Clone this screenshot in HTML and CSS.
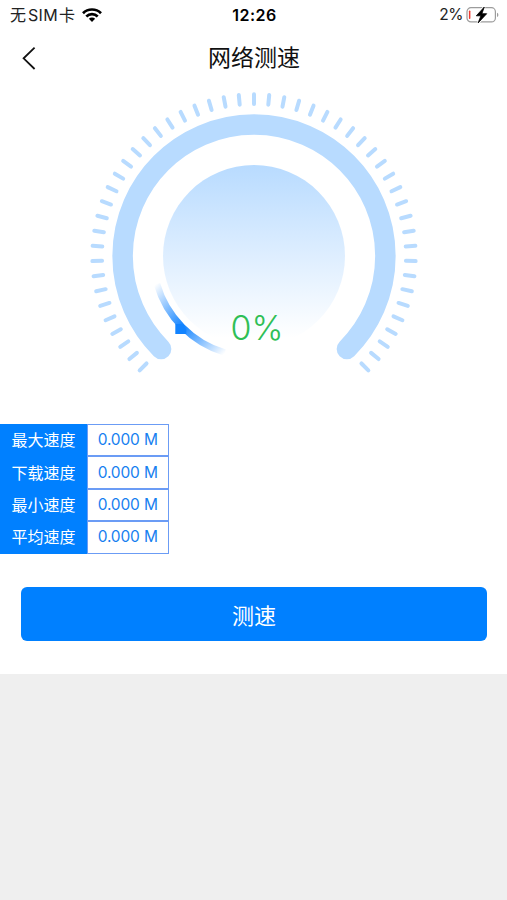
FILE: index.html
```
<!DOCTYPE html>
<html lang="zh-CN">
<head>
    <meta charset="UTF-8">
    <title>网络测速</title>
    <meta name="viewport" content="width=device-width, initial-scale=1">
    <link rel="stylesheet" href="styles.css">
</head>
<body>
<div class="page">
    <div class="status-bar">
        <div class="carrier">
            <span>无</span><span class="sim">SIM</span><span>卡</span>
            <svg class="wifi" width="20" height="14" viewBox="0 0 20 14">
                <g fill="none" stroke="#000" stroke-width="2.7">
                    <path d="M1 5.2A12.8 12.8 0 0 1 19 5.2"/>
                    <path d="M4.3 8.5A8.1 8.1 0 0 1 15.7 8.5"/>
                </g>
                <path d="M10 14 6.9 10.8A4.4 4.4 0 0 1 13.1 10.8Z"/>
            </svg>
        </div>
        <div class="time">12:26</div>
        <div class="battery">
            <span>2%</span>
            <svg width="33" height="18" viewBox="0 0 33 18">
                <rect x="1" y="1.7" width="28.4" height="14.2" rx="4" fill="none" stroke="#9c9c9c" stroke-width="1.2"/>
                <path d="M31 6.8v4.2q1.4-.6 1.4-2.1T31 6.8z" fill="#9c9c9c"/>
                <rect x="2.9" y="4.6" width="1.5" height="8.4" rx=".7" fill="#f03a30"/>
                <path d="M18.3 1 10.3 9.8h4.6L12.1 17 20.7 7.7h-4.8z" stroke="#fff" stroke-width="2.4"/>
                <path d="M18.3 1 10.3 9.8h4.6L12.1 17 20.7 7.7h-4.8z" stroke="#000" stroke-width=".8" stroke-linejoin="round"/>
            </svg>
        </div>
    </div>

    <div class="nav">
        <svg class="back" width="16" height="24" viewBox="0 0 16 24">
            <path d="M13.6 1.6 2.6 12.3 13.6 23" fill="none" stroke="#111" stroke-width="1.8"/>
        </svg>
        <h1>网络测速</h1>
    </div>

    <svg class="gauge" width="340" height="300" viewBox="-170 -170 340 300">
        <defs>
            <linearGradient id="disk" x1="0" y1="0" x2="0" y2="1">
                <stop offset="0" stop-color="#b8dbff"/>
                <stop offset=".5" stop-color="#deeeff"/>
                <stop offset=".95" stop-color="#fff"/>
            </linearGradient>
            <linearGradient id="pointer" gradientUnits="userSpaceOnUse" x1="-98" y1="28" x2="-29" y2="97">
                <stop offset="0" stop-color="#1283ff" stop-opacity="0"/>
                <stop offset=".5" stop-color="#1283ff"/>
                <stop offset="1" stop-color="#1283ff" stop-opacity="0"/>
            </linearGradient>
        </defs>
        <g id="ticks" class="ticks"></g>
        <path class="track" d="M-92.9 92.9A131.4 131.4 0 1 1 92.9 92.9"/>
        <circle r="91" fill="url(#disk)"/>
        <path class="arc" d="M-97 28A101 101 0 0 0 -29 96.7"/>
        <path class="knob" d="M-78.7 68h6l5 5v5h-11z"/>
        <text class="percent" y="84"><tspan x="-23.6" textLength="21" lengthAdjust="spacingAndGlyphs">0</tspan><tspan x="-2.6" textLength="32" lengthAdjust="spacingAndGlyphs">%</tspan></text>
    </svg>

    <table class="speeds">
        <tr><th>最大速度</th><td>0.000 M</td></tr>
        <tr><th>下载速度</th><td>0.000 M</td></tr>
        <tr><th>最小速度</th><td>0.000 M</td></tr>
        <tr><th>平均速度</th><td>0.000 M</td></tr>
    </table>

    <button type="button" class="start">测速</button>
</div>
<script>
    // 51 ticks over 270 degrees
    const ticks = document.getElementById('ticks');
    for (let i = -25; i <= 25; i++) {
      const line = document.createElementNS('http://www.w3.org/2000/svg', 'line');
      line.setAttribute('y1', -152);
      line.setAttribute('y2', -161.7);
      line.setAttribute('transform', 'rotate(' + i * 5.4 + ')');
      ticks.appendChild(line);
    }
</script>
</body>
</html>
```
FILE: styles.css
```
* {
  box-sizing: border-box;
}
body {
  margin: 0;
  background: #efefef;
  font-family: Inter, 'Noto Sans CJK SC', sans-serif;
  color: #111;
}
.page {
  height: 674px;
  background: #fff;
  display: flex;
  flex-direction: column;
}
.status-bar {
  display: grid;
  grid-template-columns: 1fr auto 1fr;
  align-items: center;
  height: 30px;
  padding: 0 8px 0 10px;
  font-size: 16px;
  line-height: 30px;
  color: #222;
}
.carrier {
  display: flex;
  align-items: center;
}
.sim {
  margin: 0 1px 0 2px;
  letter-spacing: .3px;
}
.wifi {
  margin-left: 7px;
}
.time {
  font-weight: 600;
  letter-spacing: .5px;
  color: #000;
}
.battery {
  display: flex;
  align-items: center;
  justify-content: flex-end;
  gap: 3px;
  font-size: 15.5px;
  letter-spacing: -.4px;
}
.nav {
  display: grid;
  grid-template-columns: 1fr auto 1fr;
  align-items: center;
  height: 56px;
  padding: 0 20px 0 21px;
}
h1 {
  margin: 0;
  font-size: 23px;
  font-weight: 400;
  line-height: 56px;
}
.gauge {
  align-self: center;
  flex: none;
}
.ticks {
  stroke: #b8dbff;
  stroke-width: 4;
  stroke-linecap: round;
}
.track {
  fill: none;
  stroke: #b8dbff;
  stroke-width: 20.5;
  stroke-linecap: round;
}
.arc {
  fill: none;
  stroke: url(#pointer);
  stroke-width: 6.5;
}
.knob {
  fill: #1283ff;
}
.percent {
  font-size: 34px;
  font-weight: 300;
  fill: #2fbf56;
}
.speeds {
  width: 168.5px;
  margin-top: 38px;
  border-collapse: separate;
  border-spacing: 0;
  font-size: 16px;
}
.speeds th, .speeds td {
  height: 32.4px;
  padding: 0;
  font-weight: 400;
  line-height: 24px;
  text-align: center;
}
.speeds th {
  width: 87px;
  background: #0080ff;
  color: #fff;
}
.speeds td {
  border: 1px solid #6b9cf5;
  font-size: 15.5px;
  letter-spacing: -.15px;
  color: #1680f0;
}
.start {
  height: 54px;
  margin: 33px 20px 0 21px;
  border: none;
  border-radius: 6px;
  background: #0080ff;
  color: #fff;
  font-family: inherit;
  font-size: 22px;
}
```
